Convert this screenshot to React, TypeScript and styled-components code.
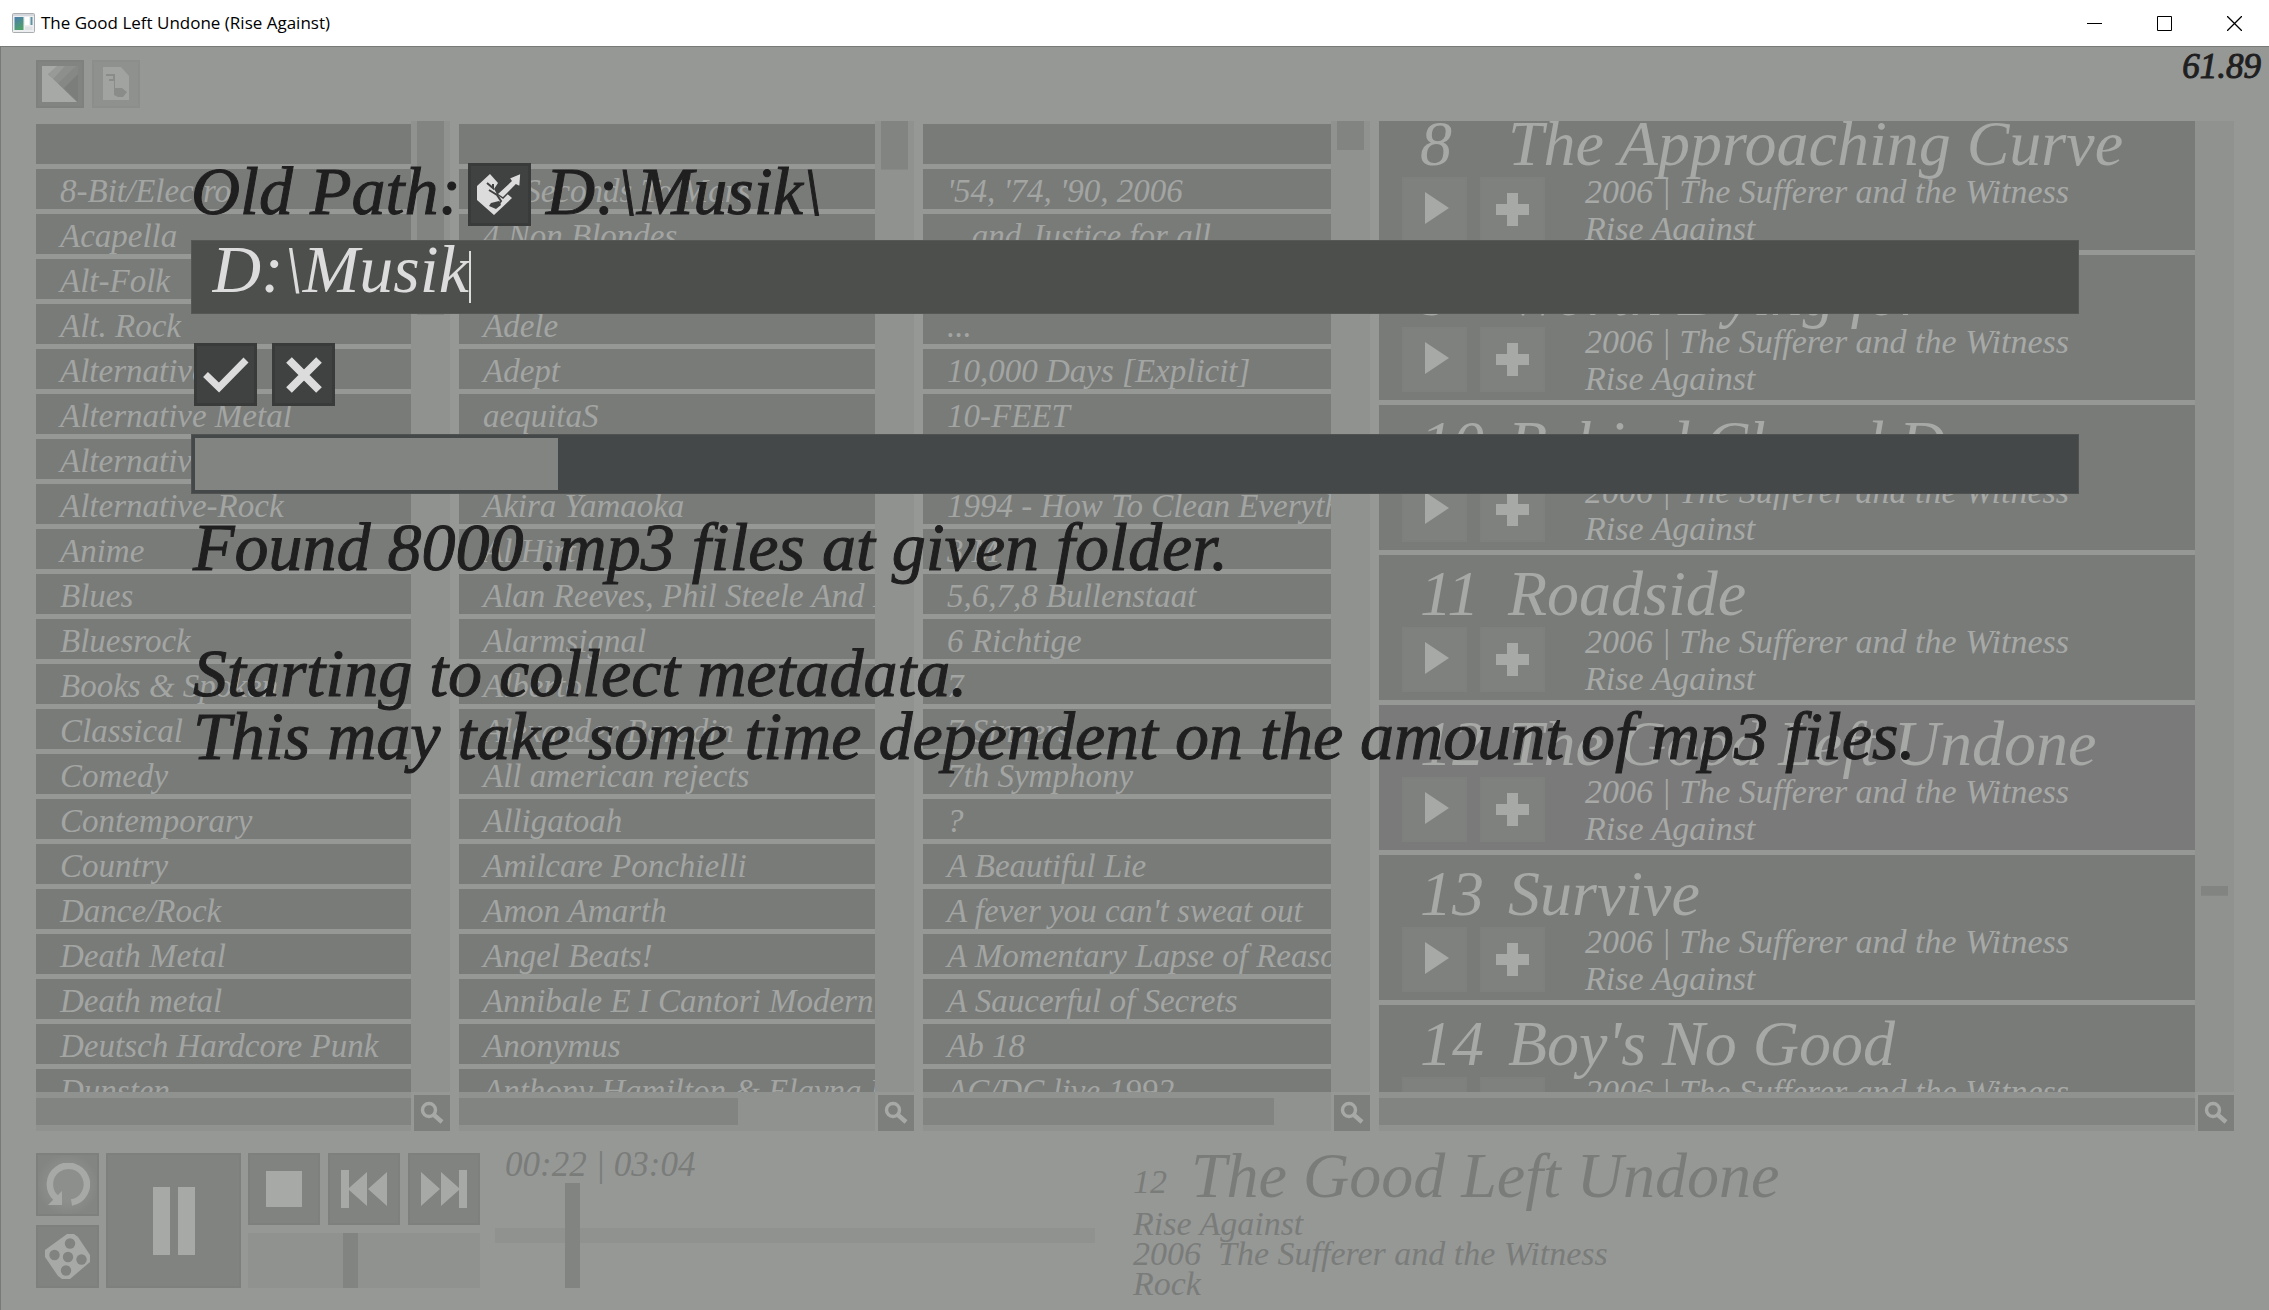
import React from "react";
import styled, { createGlobalStyle, css } from "styled-components";

const c = {
  bg: "#969896",
  track: "#909290",
  thumb: "#828482",
  row: "#797b79",
  rowActive: "#7b7a7a",
  light: "#a7a9a7",
  rowText: "#a3a5a3",
  playerText: "#7a7c7a",
  ink: "#1f1f1f",
  glyph: "#dcdcdc",
};

const serif = `"Liberation Serif", "Times New Roman", serif`;

const inkText = css`
  color: ${c.ink};
  -webkit-text-stroke: 1px ${c.ink};
`;

const GlobalStyle = createGlobalStyle`
  * { box-sizing: border-box; }
  body { margin: 0; }
  button, input { font: inherit; color: inherit; margin: 0; padding: 0; border: 0; border-radius: 0; background: none; }
  ul, ol { list-style: none; margin: 0; padding: 0; }
  p, h1, h2 { margin: 0; font-weight: normal; font-size: inherit; }
  svg { display: block; }
`;

const Window = styled.div`
  display: flex;
  flex-direction: column;
  height: 100vh;
  overflow: hidden;
  font-family: ${serif};
  font-style: italic;
`;

const TitleBar = styled.header`
  display: flex;
  align-items: center;
  height: 46px;
  flex: none;
  padding-left: 12px;
  gap: 6px;
  background: #fff;
  color: #000;
  font: 17px/24px "Open Sans", "Noto Sans", sans-serif;
`;

const WindowTitle = styled.h1`
  flex: 1;
`;

const CaptionButton = styled.button`
  display: grid;
  place-items: center;
  width: 69px;
  height: 46px;
`;

const Client = styled.main`
  position: relative;
  display: flex;
  flex-direction: column;
  flex: 1;
  min-height: 0;
  padding: 13px 35px 22px 35px;
  border-top: 1px solid #787a78;
  border-left: 1px solid #787a78;
  background: ${c.bg};
`;

const Toolbar = styled.nav`
  display: flex;
  gap: 8px;
  height: 61px;
  flex: none;
`;

const ToolButton = styled.button<{ $on?: boolean }>`
  display: grid;
  place-items: center;
  width: 48px;
  height: 48px;
  border: 2px solid ${(p) => (p.$on ? "#7f817f" : "#8c8e8c")};
  background: ${(p) => (p.$on ? c.thumb : "#8f918f")};
`;

const FrameRate = styled.output`
  position: absolute;
  top: 0;
  right: 8px;
  font-size: 35px;
  line-height: 40px;
  ${inkText}
`;

const Panels = styled.div`
  display: grid;
  grid-template-columns: 414fr 455fr 447fr 855fr;
  gap: 9px;
  flex: 1;
  min-height: 0;
`;

const Panel = styled.section`
  display: grid;
  grid-template-columns: minmax(0, 1fr) 39px;
  grid-template-rows: minmax(0, 1fr) 39px;
  min-height: 0;
`;

const Viewport = styled.div`
  overflow: hidden;
`;

const VBar = styled.div`
  padding: 0 6px;
  background: ${c.track};
`;

const VThumb = styled.div<{ $top: number; $size: number }>`
  height: 100%;
  background: linear-gradient(${c.thumb}, ${c.thumb}) no-repeat 0 ${(p) => p.$top}% / 100% ${(p) => p.$size}%;
`;

const HBar = styled.div`
  padding: 6px 0;
  background: ${c.track};
`;

const HThumb = styled.div<{ $size: number }>`
  width: ${(p) => p.$size}%;
  height: 100%;
  background: ${c.thumb};
`;

const SearchButton = styled.button`
  display: grid;
  place-items: center;
  width: 36px;
  height: 36px;
  place-self: end;
  background: #7d7f7d;
`;

const NameList = styled.ul`
  display: flex;
  flex-direction: column;
  gap: 5px;
  padding-top: 3px;
`;

const NameButton = styled.button`
  display: block;
  width: 100%;
  height: 40px;
  padding-left: 24px;
  overflow: hidden;
  text-align: left;
  white-space: nowrap;
  font-size: 33px;
  line-height: 45px;
  color: ${c.rowText};
  background: ${c.row};
`;

/* The list is scrolled 16px into its first card. */
const TrackList = styled.ol`
  display: flex;
  flex-direction: column;
  gap: 5px;
  margin-top: -16px;
`;

const TrackCard = styled.li<{ $active: boolean }>`
  flex: none;
  height: 145px;
  padding: 9px 23px 0;
  color: ${c.light};
  background: ${(p) => (p.$active ? c.rowActive : c.row)};
`;

const TrackTitle = styled.h2`
  display: flex;
  padding-left: 18px;
  font-size: 64px;
  line-height: 59px;
  white-space: nowrap;
`;

const TrackNumber = styled.span`
  width: 88px;
`;

const TrackBody = styled.div`
  display: flex;
  gap: 40px;
`;

const TrackActions = styled.div`
  display: flex;
  gap: 13px;
  padding-top: 4px;
`;

const TrackButton = styled.button`
  display: grid;
  place-items: center;
  width: 65px;
  height: 65px;
  border: 2px solid #7e807e;
  background: #7f817f;
`;

const TrackMeta = styled.p`
  font-size: 34px;
  line-height: 37px;
  white-space: pre-line;
`;

const Player = styled.footer`
  display: flex;
  align-items: flex-start;
  height: 157px;
  padding-top: 22px;
  flex: none;
  color: ${c.playerText};
`;

const Stack = styled.div<{ $gap: number }>`
  display: flex;
  flex-direction: column;
  gap: ${(p) => p.$gap}px;
`;

const Row = styled.div<{ $gap: number }>`
  display: flex;
  gap: ${(p) => p.$gap}px;
`;

const PlayerButton = styled.button<{ $size: number; $glow?: boolean }>`
  display: grid;
  place-items: center;
  width: ${(p) => p.$size}px;
  height: ${(p) => p.$size}px;
  border: 2px solid #7e807e;
  background: #818381;
  ${(p) =>
    p.$glow &&
    css`
      background: radial-gradient(#8d8f8d, #8d8f8d 40%, #838583 75%);
    `}
`;

const Volume = styled.input`
  appearance: none;
  width: 232px;
  height: 55px;
  background: ${c.track};
  &::-webkit-slider-thumb {
    appearance: none;
    width: 15px;
    height: 55px;
    background: ${c.thumb};
  }
`;

const Timeline = styled.div`
  display: flex;
  flex-direction: column;
  width: 600px;
  margin: -7px 38px 0 15px;
`;

const Clock = styled.output`
  padding-left: 10px;
  font-size: 35px;
  line-height: 37px;
`;

const Seek = styled.input`
  appearance: none;
  width: 100%;
  height: 105px;
  background: linear-gradient(${c.track}, ${c.track}) no-repeat center / 100% 15px;
  &::-webkit-slider-thumb {
    appearance: none;
    width: 15px;
    height: 105px;
    background: ${c.thumb};
  }
`;

const NowPlaying = styled.div`
  flex: 1;
  font-size: 34px;
  line-height: 30px;
  white-space: pre;
`;

const NowTitle = styled.h2`
  display: flex;
  gap: 24px;
  align-items: flex-start;
  height: 56px;
  line-height: 57px;
`;

const Big = styled.span`
  font-size: 64px;
  line-height: 45px;
`;

const Dialog = styled.form`
  position: absolute;
  inset: 111px 190px auto 190px;
  font-size: 68px;
  color: ${c.ink};
`;

const OldPath = styled.div`
  display: flex;
  gap: 7px;
  height: 82px;
  padding-top: 5px;
  line-height: 57px;
  white-space: nowrap;
  ${inkText}
`;

const OldPathValue = styled.span`
  padding-left: 8px;
`;

const DialogButton = styled.button`
  display: grid;
  place-items: center;
  flex: none;
  width: 63px;
  height: 63px;
  border: 3px solid #393b3a;
  background: #404241;
`;

const Field = styled.label`
  display: flex;
  align-items: center;
  height: 74px;
  padding-left: 20px;
  border: 1px solid #565856;
  background: #4d4f4d;
  color: ${c.glyph};
`;

const PathInput = styled.input`
  field-sizing: content;
  height: 72px;
  padding-bottom: 15px;
  outline: 0;
  font-style: italic;
`;

const Caret = styled.span`
  width: 2px;
  height: 52px;
  background: ${c.glyph};
`;

const Confirm = styled.div`
  display: flex;
  gap: 15px;
  padding: 29px 3px 28px;
`;

const Progress = styled.progress`
  appearance: none;
  display: block;
  width: 100%;
  height: 60px;
  padding: 3px;
  border: 1px solid #4f5251;
  background: #454849;
  &::-webkit-progress-inner-element {
    height: 100%;
  }
  &::-webkit-progress-bar {
    background: transparent;
  }
  &::-webkit-progress-value {
    background: #828482;
  }
`;

const Message = styled.p`
  padding: 22px 2px 0;
  line-height: 63px;
  white-space: pre-line;
  ${inkText}
`;

const genres = ["", "8-Bit/Electro", "Acapella", "Alt-Folk", "Alt. Rock", "Alternative", "Alternative Metal", "Alternative Rock", "Alternative-Rock", "Anime", "Blues", "Bluesrock", "Books & Spoken", "Classical", "Comedy", "Contemporary", "Country", "Dance/Rock", "Death Metal", "Death metal", "Deutsch Hardcore Punk", "Dunsten"];
const artists = ["", "30 Seconds To Mars", "4 Non Blondes", "A Day To Remember", "Adele", "Adept", "aequitaS", "Air", "Akira Yamaoka", "Al Hirt", "Alan Reeves, Phil Steele And Philip", "Alarmsignal", "Alberto", "Alexander Borodin", "All american rejects", "Alligatoah", "Amilcare Ponchielli", "Amon Amarth", "Angel Beats!", "Annibale E I Cantori Moderni", "Anonymus", "Anthony Hamilton & Elayna Boynton"];
const albums = ["", "'54, '74, '90, 2006", "...and Justice for all", "...Baby One More Time", "...", "10,000 Days [Explicit]", "10-FEET", "1984", "1994 - How To Clean Everything", "3 M", "5,6,7,8 Bullenstaat", "6 Richtige", "7", "7 Sinners", "7th Symphony", "?", "A Beautiful Lie", "A fever you can't sweat out", "A Momentary Lapse of Reason", "A Saucerful of Secrets", "Ab 18", "AC/DC live 1992"];

const tracks = [
  { no: 8, title: "The Approaching Curve" },
  { no: 9, title: "Worth Dying for" },
  { no: 10, title: "Behind Closed Doors" },
  { no: 11, title: "Roadside" },
  { no: 12, title: "The Good Left Undone" },
  { no: 13, title: "Survive" },
  { no: 14, title: "Boy's No Good" },
];

const SearchIcon = () => (
  <svg width="24" height="24" viewBox="0 0 24 24" fill="none" stroke={c.light}>
    <circle cx="9" cy="9" r="6.5" strokeWidth="3.4" />
    <path d="M13.5 13.5 22 21" strokeWidth="4.4" />
  </svg>
);

type ScrollPanelProps = {
  label: string;
  vTop?: number;
  vSize: number;
  hSize: number;
  children: React.ReactNode;
};

const ScrollPanel = ({ label, vTop = 0, vSize, hSize, children }: ScrollPanelProps) => (
  <Panel aria-label={label}>
    <Viewport>{children}</Viewport>
    <VBar>
      <VThumb $top={vTop} $size={vSize} />
    </VBar>
    <HBar>
      <HThumb $size={hSize} />
    </HBar>
    <SearchButton type="button" aria-label={`Search ${label}`}>
      <SearchIcon />
    </SearchButton>
  </Panel>
);

const Names = ({ items }: { items: string[] }) => (
  <NameList>
    {items.map((name, i) => (
      <li key={i}>
        <NameButton type="button" aria-label={name || "All"}>
          {name}
        </NameButton>
      </li>
    ))}
  </NameList>
);

const AppIcon = () => (
  <svg width="23" height="20" viewBox="0 0 23 20">
    <defs>
      <linearGradient id="pane" x1="0" y1="0" x2="0.4" y2="1">
        <stop offset="0" stopColor="#4a7cae" />
        <stop offset="1" stopColor="#4f9f6d" />
      </linearGradient>
    </defs>
    <rect x="0.5" y="0.5" width="22" height="19" rx="1" fill="#eceef0" stroke="#a9adb1" />
    <rect x="1" y="1" width="21" height="2" fill="#d4d8dc" />
    <rect x="2.5" y="4" width="9" height="13" fill="url(#pane)" />
    <rect x="13" y="4" width="4" height="8" fill="#fff" />
    <rect x="18.5" y="4" width="2" height="8" fill="#5f93a4" />
    <rect x="13" y="13.5" width="7.5" height="3.5" fill="#dfe2e5" />
  </svg>
);

const App = () => (
  <Window>
    <GlobalStyle />
    <TitleBar>
      <AppIcon />
      <WindowTitle>The Good Left Undone (Rise Against)</WindowTitle>
      <Row $gap={1}>
        <CaptionButton type="button" aria-label="Minimize">
          <svg width="15" height="15" stroke="#000"><path d="M0 7.5h15" /></svg>
        </CaptionButton>
        <CaptionButton type="button" aria-label="Maximize">
          <svg width="15" height="15" fill="none" stroke="#000"><path d="M.5.5h14v14H.5z" /></svg>
        </CaptionButton>
        <CaptionButton type="button" aria-label="Close">
          <svg width="15" height="15" stroke="#000" strokeWidth="1.3"><path d="M0 0 15 15M15 0 0 15" /></svg>
        </CaptionButton>
      </Row>
    </TitleBar>

    <Client>
      <FrameRate>61.89</FrameRate>
      <Toolbar>
        <ToolButton type="button" aria-label="Library" $on>
          <svg width="36" height="36" viewBox="0 0 36 36">
            <path d="M0 0h36v36z" fill="#7c7e7c" />
            <path d="M0 0h36v8L20 24 11 13z" fill="#868886" />
            <path d="M0 0h34L15.5 18 11 13z" fill="#8d8f8d" />
            <path d="M0 0h23L11 13z" fill="#989a98" />
            <path d="M0 0h15L6 8 35 36H0z" fill={c.light} />
          </svg>
        </ToolButton>
        <ToolButton type="button" aria-label="Playlist">
          <svg width="28" height="34" viewBox="0 0 28 34">
            <path d="M1 0h18l8 9v24H1z" fill="#a1a3a1" />
            <path d="M4 7h9v14h7l5 4-4 5h-5l-4-2V14H7v-2h4V9H4z" fill="#8a8c8a" />
          </svg>
        </ToolButton>
      </Toolbar>

      <Panels>
        <ScrollPanel label="Genres" vSize={20} hSize={100}>
          <Names items={genres} />
        </ScrollPanel>
        <ScrollPanel label="Artists" vSize={5} hSize={67}>
          <Names items={artists} />
        </ScrollPanel>
        <ScrollPanel label="Albums" vSize={3} hSize={86}>
          <Names items={albums} />
        </ScrollPanel>
        <ScrollPanel label="Tracks" vTop={79.6} vSize={1} hSize={100}>
          <TrackList>
            {tracks.map((t) => (
              <TrackCard key={t.no} $active={t.no === 12}>
                <TrackTitle>
                  <TrackNumber>{t.no}</TrackNumber>
                  {t.title}
                </TrackTitle>
                <TrackBody>
                  <TrackActions>
                    <TrackButton type="button" aria-label={`Play ${t.title}`}>
                      <svg width="32" height="36" viewBox="0 0 32 36" fill={c.light}><path d="M6 0v32l24-16z" /></svg>
                    </TrackButton>
                    <TrackButton type="button" aria-label={`Add ${t.title}`}>
                      <svg width="33" height="33" viewBox="0 0 33 33" fill={c.light}><path d="M11 0h11v11h11v11H22v11H11V22H0V11h11z" /></svg>
                    </TrackButton>
                  </TrackActions>
                  <TrackMeta>{"2006 | The Sufferer and the Witness\nRise Against"}</TrackMeta>
                </TrackBody>
              </TrackCard>
            ))}
          </TrackList>
        </ScrollPanel>
      </Panels>

      <Player>
        <Row $gap={7}>
          <Stack $gap={9}>
            <PlayerButton type="button" aria-label="Repeat" $size={63} $glow>
              <svg width="44" height="44" viewBox="0 0 44 44" fill="none">
                <path d="M10 35A18.5 18.5 0 1 1 25.5 39.5" stroke={c.light} strokeWidth="6.5" />
                <path d="M2 42h14V28z" fill={c.light} />
              </svg>
            </PlayerButton>
            <PlayerButton type="button" aria-label="Shuffle" $size={63}>
              <svg width="46" height="46" viewBox="0 0 46 46">
                <path d="M22 0h7l4 3 12 18v7L25 45h-8l-4-3L0 23v-7z" fill={c.light} />
                <g fill="#818381">
                  <circle cx="25" cy="9.5" r="5.2" />
                  <circle cx="9.5" cy="21" r="5.2" />
                  <circle cx="23" cy="23" r="5.2" />
                  <circle cx="36.5" cy="25.5" r="5.2" />
                  <circle cx="21" cy="36.5" r="5.2" />
                </g>
              </svg>
            </PlayerButton>
          </Stack>
          <PlayerButton type="button" aria-label="Pause" $size={135}>
            <svg width="42" height="68" fill={c.light}><path d="M0 0h17v68H0zM25 0h17v68H25z" /></svg>
          </PlayerButton>
          <Stack $gap={8}>
            <Row $gap={8}>
              <PlayerButton type="button" aria-label="Stop" $size={72}>
                <svg width="36" height="36" fill={c.light}><path d="M0 0h36v36H0z" /></svg>
              </PlayerButton>
              <PlayerButton type="button" aria-label="Previous" $size={72}>
                <svg width="46" height="38" viewBox="0 0 46 38" fill={c.light}><path d="M0 0h8v18L26 2v34L8 20v18H0zM27 19 46 2v34z" /></svg>
              </PlayerButton>
              <PlayerButton type="button" aria-label="Next" $size={72}>
                <svg width="46" height="38" viewBox="0 0 46 38" fill={c.light}><path d="M46 0h-8v18L20 2v34l18-16v18h8zM19 19 0 2v34z" /></svg>
              </PlayerButton>
            </Row>
            <Volume type="range" aria-label="Volume" min={0} max={100} defaultValue={44} />
          </Stack>
        </Row>
        <Timeline>
          <Clock>00:22 | 03:04</Clock>
          <Seek type="range" aria-label="Position" min={0} max={184} defaultValue={22} />
        </Timeline>
        <NowPlaying>
          <NowTitle>
            <span>12</span>
            <Big>The Good Left Undone</Big>
          </NowTitle>
          <p>{"Rise Against\n2006  The Sufferer and the Witness\nRock"}</p>
        </NowPlaying>
      </Player>

      <Dialog onSubmit={(e) => e.preventDefault()}>
        <OldPath>
          <span>Old Path:</span>
          <DialogButton type="button" aria-label="Browse for music folder">
            <svg width="45" height="43" viewBox="0 0 45 43">
              <path d="M13 1 0 13v14l17 15 18-17-7-6-8 2-3-5 4-6z" fill={c.glyph} />
              <path d="M20 21 34 8l-2-3L44 0l-1 14-4-2-13 13z" fill={c.glyph} stroke="#404241" strokeWidth="1.5" />
              <path d="M10 10 16 15v-4M12 17l8 5 4 6-2 3" fill="none" stroke="#404241" strokeWidth="2" />
              <path d="m14 30 8-2 2 4-5 4-7-3z" fill="#404241" />
            </svg>
          </DialogButton>
          <OldPathValue>D:\Musik\</OldPathValue>
        </OldPath>
        <Field>
          <PathInput type="text" aria-label="New path" defaultValue="D:\Musik" />
          <Caret />
        </Field>
        <Confirm>
          <DialogButton type="submit" aria-label="Apply">
            <svg width="46" height="36" viewBox="0 0 46 36" fill="none" stroke={c.glyph} strokeWidth="7"><path d="M2.5 17.5 16 30.5 43 3" /></svg>
          </DialogButton>
          <DialogButton type="button" aria-label="Cancel">
            <svg width="36" height="36" viewBox="0 0 36 36" stroke={c.glyph} strokeWidth="8"><path d="M3 3 33 33M33 3 3 33" /></svg>
          </DialogButton>
        </Confirm>
        <Progress aria-label="Import progress" value={1544} max={8000} />
        <Message>
          {"Found 8000 .mp3 files at given folder.\n\nStarting to collect metadata.\nThis may take some time dependent on the amount of mp3 files."}
        </Message>
      </Dialog>
    </Client>
  </Window>
);

export default App;
